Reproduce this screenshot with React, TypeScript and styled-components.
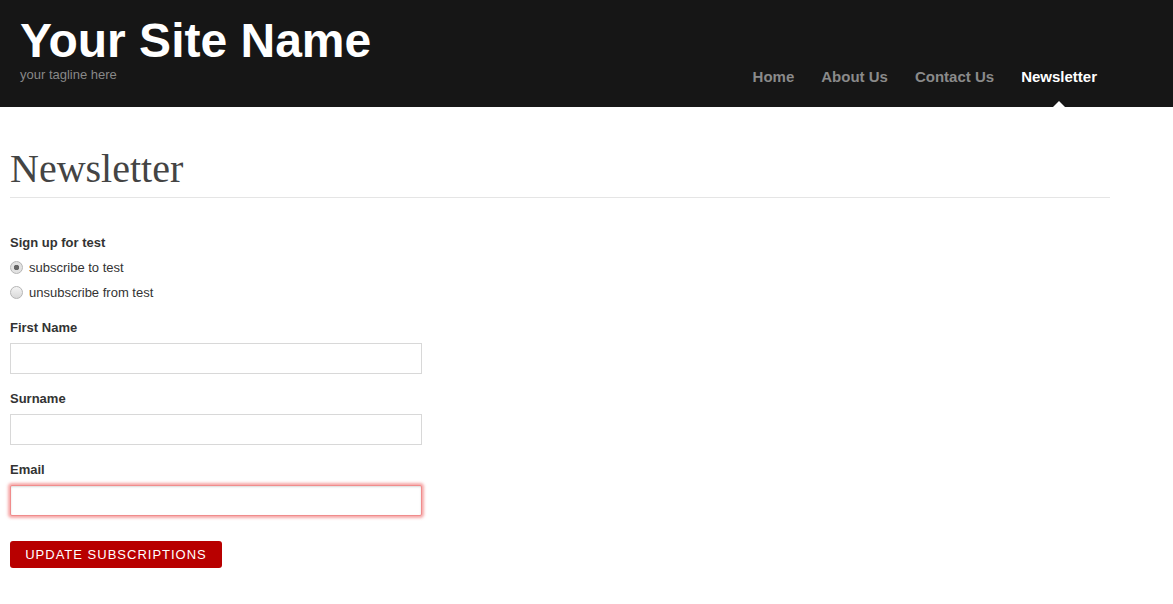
import { createGlobalStyle, styled } from 'styled-components';

const GlobalStyle = createGlobalStyle`
  html, body {
    margin: 0;
    padding: 0;
    background: #fff;
    font-family: "Liberation Sans", Arial, sans-serif;
    color: #333;
  }
`;

const Header = styled.header`
  height: 107px;
  background: #161616;
  display: flex;
  justify-content: space-between;
  align-items: flex-start;
  padding: 0 76px 0 20px;
  box-sizing: border-box;
`;

const Brand = styled.div`
  display: flex;
  flex-direction: column;
  padding-top: 14px;
`;

const SiteName = styled.h1`
  margin: 0;
  font-size: 48px;
  line-height: 53px;
  font-weight: bold;
  color: #fff;
`;

const Tagline = styled.p`
  margin: 0;
  font-size: 13px;
  line-height: 16px;
  color: #888;
`;

const Nav = styled.nav`
  display: flex;
  gap: 27px;
  padding-top: 68px;
`;

const NavItem = styled.a<{ $active?: boolean }>`
  position: relative;
  font-size: 15px;
  line-height: 18px;
  font-weight: bold;
  text-decoration: none;
  color: ${({ $active }) => ($active ? '#fff' : '#8a8a8a')};
  cursor: pointer;
  &::after {
    content: '';
    display: ${({ $active }) => ($active ? 'block' : 'none')};
    position: absolute;
    left: 50%;
    top: 33px;
    margin-left: -6px;
    border-left: 6px solid transparent;
    border-right: 6px solid transparent;
    border-bottom: 6px solid #fff;
  }
`;

const Main = styled.main`
  width: 1100px;
  padding: 0 10px;
`;

const PageTitle = styled.h2`
  margin: 0;
  padding: 42px 0 8px;
  font-family: "Liberation Serif", "DejaVu Serif", serif;
  font-weight: normal;
  font-size: 40px;
  line-height: 40px;
  color: #444;
  border-bottom: 1px solid #e5e5e5;
`;

const Form = styled.form`
  display: flex;
  flex-direction: column;
  padding-top: 37px;
`;

const Label = styled.label`
  display: block;
  font-size: 13px;
  line-height: 16px;
  font-weight: bold;
  color: #333;
  margin-bottom: 7px;
`;

const RadioRow = styled.label`
  display: flex;
  align-items: center;
  gap: 6px;
  font-size: 13px;
  line-height: 16px;
  color: #333;
  height: 25px;
  margin-top: -3px;
  & + & {
    margin-top: 0;
  }
`;

const Radio = styled.input`
  appearance: none;
  width: 13px;
  height: 13px;
  margin: 0;
  border: 1px solid #b5b5b5;
  border-radius: 50%;
  box-sizing: border-box;
  background: linear-gradient(#f4f4f4, #d9d9d9);
  &:checked {
    background: radial-gradient(circle, #666 0 2.5px, #e2e2e2 3px);
  }
`;

const Group = styled.div`
  margin-top: 15px;
  & + & {
    margin-top: 17px;
  }
`;

const TextInput = styled.input<{ $error?: boolean }>`
  display: block;
  width: 412px;
  height: 31px;
  box-sizing: border-box;
  margin: 0;
  border: 1px solid ${({ $error }) => ($error ? '#f08c8c' : '#d8d8d8')};
  border-radius: ${({ $error }) => ($error ? '2px' : '0')};
  box-shadow: ${({ $error }) =>
    $error ? '0 0 3px 2px rgba(240, 110, 110, 0.6), inset 0 1px 2px rgba(0,0,0,0.15)' : 'none'};
  outline: none;
  font-family: inherit;
  font-size: 13px;
  padding: 4px 8px;
`;

const SubmitButton = styled.button`
  align-self: flex-start;
  margin-top: 25px;
  width: 212px;
  height: 27px;
  background: #b80000;
  border: none;
  border-radius: 3px;
  color: #fff;
  font-family: inherit;
  font-size: 13px;
  letter-spacing: 1px;
  text-transform: uppercase;
  cursor: pointer;
`;

const links = ['Home', 'About Us', 'Contact Us', 'Newsletter'];

export default function App() {
  return (
    <>
      <GlobalStyle />
      <Header>
        <Brand>
          <SiteName>Your Site Name</SiteName>
          <Tagline>your tagline here</Tagline>
        </Brand>
        <Nav>
          {links.map((l) => (
            <NavItem key={l} $active={l === 'Newsletter'}>
              {l}
            </NavItem>
          ))}
        </Nav>
      </Header>
      <Main>
        <PageTitle>Newsletter</PageTitle>
        <Form onSubmit={(e) => e.preventDefault()}>
          <div>
            <Label as="div">Sign up for test</Label>
            <RadioRow>
              <Radio type="radio" name="sub" defaultChecked />
              subscribe to test
            </RadioRow>
            <RadioRow>
              <Radio type="radio" name="sub" />
              unsubscribe from test
            </RadioRow>
          </div>
          <Group>
            <Label>First Name</Label>
            <TextInput type="text" />
          </Group>
          <Group>
            <Label>Surname</Label>
            <TextInput type="text" />
          </Group>
          <Group>
            <Label>Email</Label>
            <TextInput type="email" $error />
          </Group>
          <SubmitButton type="submit">Update Subscriptions</SubmitButton>
        </Form>
      </Main>
    </>
  );
}
